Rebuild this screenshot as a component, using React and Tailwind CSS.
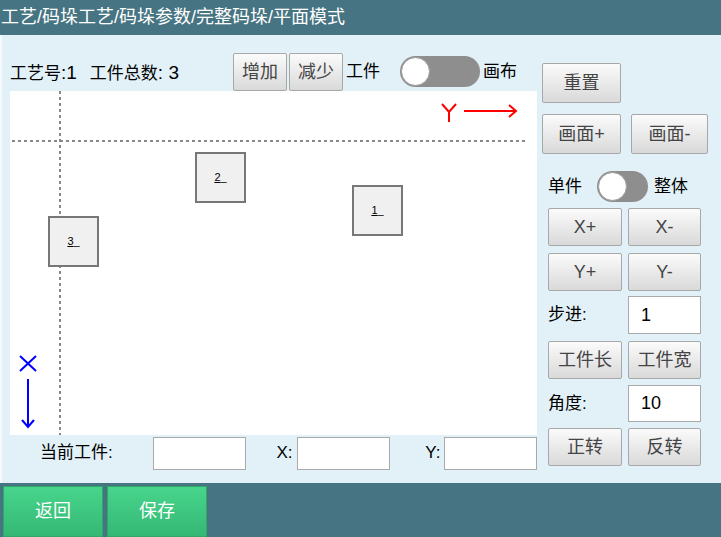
import React from "react";

const font = { fontFamily: '"Liberation Sans", "Noto Sans CJK SC", sans-serif' };

function GrayButton({ className = "", children }) {
  return (
    <button
      className={
        "flex items-center justify-center border border-[#a8a8a8] rounded-[2px] bg-gradient-to-b from-[#fbfbfb] to-[#d9d9d9] text-[#444] text-[18px] leading-none " +
        className
      }
    >
      {children}
    </button>
  );
}

function Toggle({ className = "" }) {
  return (
    <div className={"relative rounded-full bg-[#8e8e8e] " + className}>
      <div className="absolute left-[1px] top-[1px] bottom-[1px] aspect-square rounded-full bg-white border border-[#999]" />
    </div>
  );
}

function Piece({ n, className }) {
  return (
    <div
      className={
        "absolute w-[51px] h-[51px] border-2 border-[#777] bg-[#f0f0f0] flex items-center justify-center text-[11px] text-black " +
        className
      }
    >
      <span>
        <span className="underline">{n}</span>_
      </span>
    </div>
  );
}

function TextBox({ className = "", value = "" }) {
  return (
    <div
      className={
        "h-[33px] bg-white border border-[#aaa] flex items-center pl-[12px] text-[18px] text-black " + className
      }
    >
      {value}
    </div>
  );
}

export default function App() {
  return (
    <div className="w-[721px] h-[537px] flex flex-col overflow-hidden" style={font}>
      {/* title bar */}
      <div className="h-[35px] bg-[#467482] text-white text-[18px] flex items-center pl-[1px] shrink-0">
        工艺/码垛工艺/码垛参数/完整码垛/平面模式
      </div>

      {/* body */}
      <div className="flex-1 bg-[#e2f1f7] flex border-l-2 border-[#f4fafc]">
        {/* left column */}
        <div className="w-[535px] pl-[8px] flex flex-col">
          <div className="mt-[18px] h-[37px] flex items-center text-[17px] text-black">
            <span className="w-[223px] pt-[3px]">
              工艺号<span className="text-[19px]">:1</span>
              <span className="ml-[13px]">工件总数</span>
              <span className="text-[19px]">: 3</span>
            </span>
            <GrayButton className="w-[54px] h-[38px]">增加</GrayButton>
            <GrayButton className="w-[54px] h-[38px] ml-[2px]">减少</GrayButton>
            <span className="ml-[3px]">工件</span>
            <Toggle className="w-[80px] h-[31px] ml-[20px]" />
            <span className="ml-[3px]">画布</span>
          </div>

          {/* canvas */}
          <div className="relative mt-[1px] w-[527px] h-[344px] bg-white">
            <svg className="absolute inset-0" width="527" height="344">
              <line x1="50" y1="0" x2="50" y2="344" stroke="#888" strokeWidth="2" strokeDasharray="3 3" />
              <line x1="2" y1="50" x2="516" y2="50" stroke="#888" strokeWidth="2" strokeDasharray="3 3" />
              {/* Y axis */}
              <path d="M432 13 L439 21 L446 13 M439 21 L439 31" stroke="#f00" strokeWidth="2" fill="none" />
              <path d="M454 20 L506 20 M499 14 L506 20 L499 26" stroke="#f00" strokeWidth="2" fill="none" />
              {/* X axis */}
              <path d="M10 265 L26 280 M26 265 L10 280" stroke="#00f" strokeWidth="2" fill="none" />
              <path d="M18 288 L18 336 M12 329 L18 336 L24 329" stroke="#00f" strokeWidth="2" fill="none" />
            </svg>
            <Piece n="2" className="left-[185px] top-[61px]" />
            <Piece n="3" className="left-[38px] top-[125px]" />
            <Piece n="1" className="left-[342px] top-[94px]" />
          </div>

          {/* current piece row */}
          <div className="h-[34px] flex items-center text-[17px] text-black mt-[1px]">
            <span className="ml-[30px] w-[113px]">当前工件:</span>
            <TextBox className="w-[93px]" />
            <span className="ml-[31px] w-[21px]">X:</span>
            <TextBox className="w-[93px]" />
            <span className="ml-[35px] w-[19px]">Y:</span>
            <TextBox className="w-[93px]" />
          </div>
        </div>

        {/* right panel */}
        <div className="flex flex-col pl-[5px] text-[17px] text-black">
          <GrayButton className="mt-[28px] w-[79px] h-[40px]">重置</GrayButton>
          <div className="mt-[11px] flex gap-[10px]">
            <GrayButton className="w-[79px] h-[40px]">画面+</GrayButton>
            <GrayButton className="w-[77px] h-[40px]">画面-</GrayButton>
          </div>
          <div className="mt-[17px] h-[31px] flex items-center pl-[6px]">
            <span>单件</span>
            <Toggle className="w-[51px] h-[31px] ml-[15px]" />
            <span className="ml-[6px]">整体</span>
          </div>
          <div className="pl-[6px] flex flex-col">
            <div className="mt-[6px] flex gap-[6px]">
              <GrayButton className="w-[74px] h-[38px]">X+</GrayButton>
              <GrayButton className="w-[73px] h-[38px]">X-</GrayButton>
            </div>
            <div className="mt-[7px] flex gap-[6px]">
              <GrayButton className="w-[74px] h-[38px]">Y+</GrayButton>
              <GrayButton className="w-[73px] h-[38px]">Y-</GrayButton>
            </div>
            <div className="mt-[5px] h-[38px] flex items-center">
              <span className="w-[80px]">步进:</span>
              <TextBox className="w-[73px] h-[38px]" value="1" />
            </div>
            <div className="mt-[7px] flex gap-[6px]">
              <GrayButton className="w-[74px] h-[38px]">工件长</GrayButton>
              <GrayButton className="w-[73px] h-[38px]">工件宽</GrayButton>
            </div>
            <div className="mt-[6px] h-[37px] flex items-center">
              <span className="w-[80px]">角度:</span>
              <TextBox className="w-[73px] h-[37px]" value="10" />
            </div>
            <div className="mt-[6px] flex gap-[6px]">
              <GrayButton className="w-[74px] h-[38px]">正转</GrayButton>
              <GrayButton className="w-[73px] h-[38px]">反转</GrayButton>
            </div>
          </div>
        </div>
      </div>

      {/* footer */}
      <div className="h-[54px] bg-[#467482] flex items-end gap-[4px] pl-[3px] pt-[3px] shrink-0">
        <button className="w-[100px] h-[51px] bg-gradient-to-b from-[#48d58c] to-[#34b874] border border-[#2fa866] text-white text-[18px]">
          返回
        </button>
        <button className="w-[100px] h-[51px] bg-gradient-to-b from-[#48d58c] to-[#34b874] border border-[#2fa866] text-white text-[18px]">
          保存
        </button>
      </div>
    </div>
  );
}
